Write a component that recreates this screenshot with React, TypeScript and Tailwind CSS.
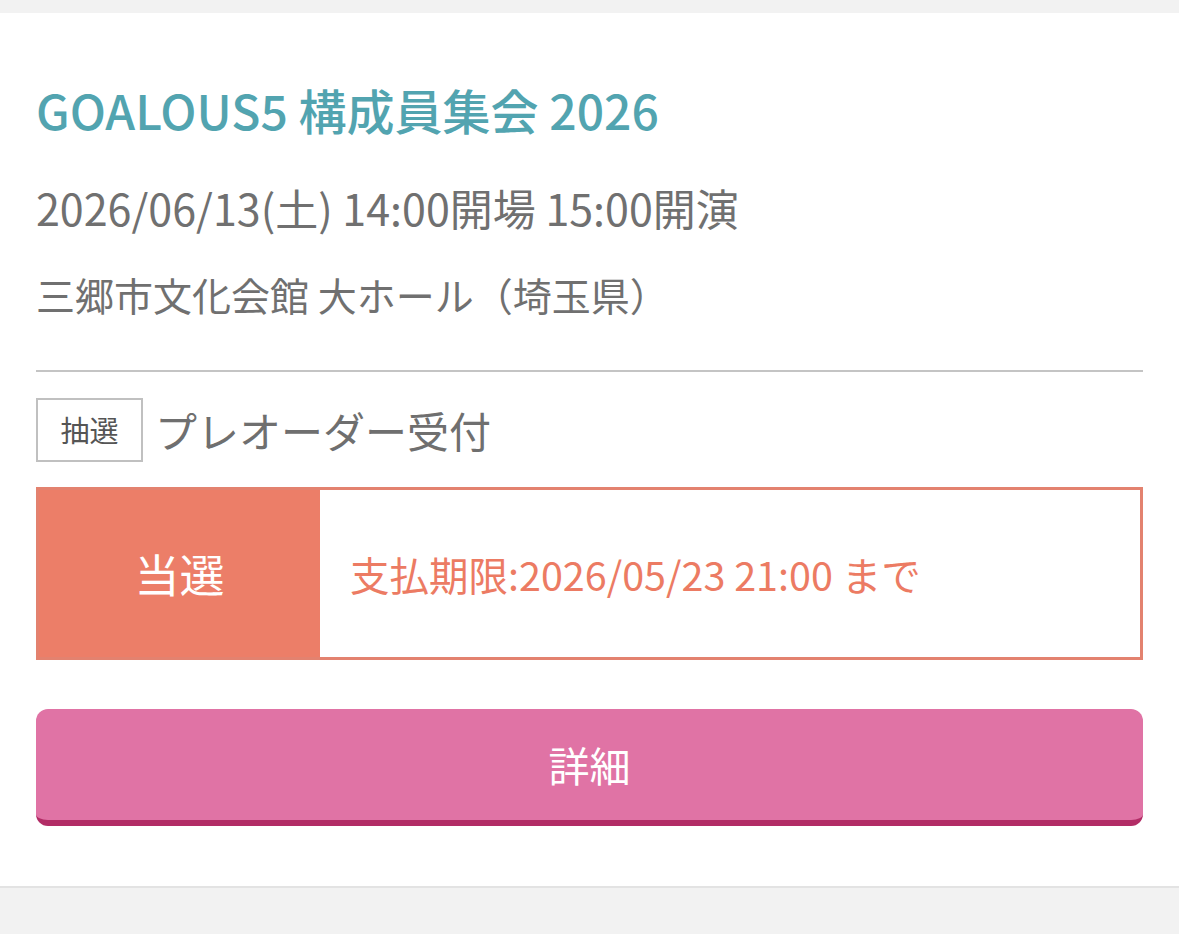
export default function App() {
  const font = { fontFamily: '"Noto Sans CJK JP", "Noto Sans", sans-serif' };
  return (
    <div className="min-h-[934px] bg-[#f2f2f2] pt-[13px]" style={font}>
      <div className="bg-white border-b-2 border-[#e3e3e3] px-[36px] pt-[62px] pb-[60px]">
        <h1 className="text-[48px] leading-[68px] font-medium text-[#52a4b0]">
          GOALOUS5 構成員集会 2026
        </h1>
        <p className="mt-[34px] text-[43px] leading-[60px] text-[#707070]">
          2026/06/13(土) 14:00開場 15:00開演
        </p>
        <p className="mt-[29px] text-[39px] leading-[56px] text-[#707070]">
          三郷市文化会館 大ホール（埼玉県）
        </p>

        <div className="mt-[48px] h-[2px] bg-[#c4c4c4]" />

        <div className="mt-[26px] flex items-center gap-[12px]">
          <span className="flex h-[64px] w-[107px] items-center justify-center border-2 border-[#c0c0c0] text-[29px] text-[#555]">
            抽選
          </span>
          <span className="text-[42px] leading-[56px] text-[#6f6f6f]">プレオーダー受付</span>
        </div>

        <div className="mt-[25px] flex h-[173px] border-[3px] border-[#e3826f]">
          <div className="flex w-[281px] items-center justify-center bg-[#ec7e68] text-[45px] text-white">
            当選
          </div>
          <div className="flex flex-1 items-center pl-[30px] text-[39.5px] text-[#ec7b63]">
            支払期限:2026/05/23 21:00 まで
          </div>
        </div>

        <button className="mt-[49px] flex h-[117px] w-full items-center justify-center rounded-[12px] border-b-[6px] border-[#b22c66] bg-[#e073a5] text-[41px] text-white">
          詳細
        </button>
      </div>
    </div>
  );
}
